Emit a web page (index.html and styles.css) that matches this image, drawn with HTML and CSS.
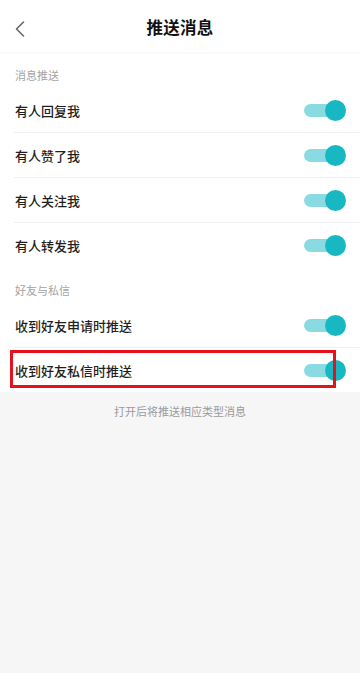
FILE: index.html
```html
<!DOCTYPE html>
<html lang="zh-CN">
<head>
<meta charset="utf-8">
<meta name="viewport" content="width=360">
<link rel="stylesheet" href="styles.css">
</head>
<body>
<div class="page">
  <header class="nav">
    <span class="back">
      <svg width="12" height="18" viewBox="0 0 12 18"><path d="M9.5 2 L2.5 9 L9.5 16" fill="none" stroke="#666" stroke-width="1.6" stroke-linecap="round" stroke-linejoin="round"/></svg>
    </span>
    <h1 class="title">推送消息</h1>
  </header>
  <main class="content">
    <div class="section-label">消息推送</div>
    <div class="row"><span class="row-text">有人回复我</span><span class="switch"><span class="knob"></span></span></div>
    <div class="row"><span class="row-text">有人赞了我</span><span class="switch"><span class="knob"></span></span></div>
    <div class="row"><span class="row-text">有人关注我</span><span class="switch"><span class="knob"></span></span></div>
    <div class="row last"><span class="row-text">有人转发我</span><span class="switch"><span class="knob"></span></span></div>
    <div class="section-label">好友与私信</div>
    <div class="row"><span class="row-text">收到好友申请时推送</span><span class="switch"><span class="knob"></span></span></div>
    <div class="row last highlighted"><span class="row-text">收到好友私信时推送</span><span class="switch"><span class="knob"></span></span><span class="mark"></span></div>
  </main>
  <p class="footer-note">打开后将推送相应类型消息</p>
</div>
</body>
</html>
```
FILE: styles.css
```css
* { box-sizing: border-box; }
html, body { margin: 0; padding: 0; }
body {
  background: #f6f6f7;
  font-family: "Noto Sans CJK SC", "Noto Sans", sans-serif;
  color: #1c1c1c;
  width: 360px;
  height: 673px;
  overflow: hidden;
}
.page { display: flex; flex-direction: column; }
.nav {
  height: 52px;
  background: #fff;
  display: flex;
  align-items: center;
  justify-content: center;
  position: relative;
  box-shadow: 0 1px 2px rgba(0,0,0,0.04);
  z-index: 1;
}
.back {
  position: absolute;
  left: 14px;
  top: 20px;
  display: flex;
}
.title {
  margin: 0;
  font-size: 16.5px;
  font-weight: 700;
  color: #111;
  letter-spacing: 0.2px;
  line-height: 1;
  margin-top: 2px;
}
.content { background: #fff; }
.section-label {
  padding: 14px 15px 4px;
  font-size: 11px;
  line-height: 18px;
  color: #a3a3a3;
}
.row {
  height: 45px;
  margin-left: 14px;
  padding-right: 14px;
  padding-left: 1px;
  display: flex;
  align-items: center;
  justify-content: space-between;
  border-bottom: 1px solid #efefef;
  position: relative;
}
.row.last { border-bottom: none; height: 44px; }
.row-text {
  font-size: 13px;
  font-weight: 500;
  color: #1f1f1f;
}
.switch {
  width: 42px;
  height: 21px;
  position: relative;
  display: block;
}
.switch::before {
  content: "";
  position: absolute;
  left: 0;
  top: 4px;
  width: 32px;
  height: 13px;
  border-radius: 7px;
  background: #8adbe1;
}
.knob {
  position: absolute;
  right: 0;
  top: 0;
  width: 21px;
  height: 21px;
  border-radius: 50%;
  background: #18b8c3;
}
.mark {
  position: absolute;
  left: -4px;
  top: 2px;
  width: 326px;
  height: 38px;
  border: 3px solid #e5121d;
  pointer-events: none;
}
.footer-note {
  margin: 11px 0 0;
  text-align: center;
  font-size: 11px;
  line-height: 16px;
  color: #9a9a9a;
}
```
